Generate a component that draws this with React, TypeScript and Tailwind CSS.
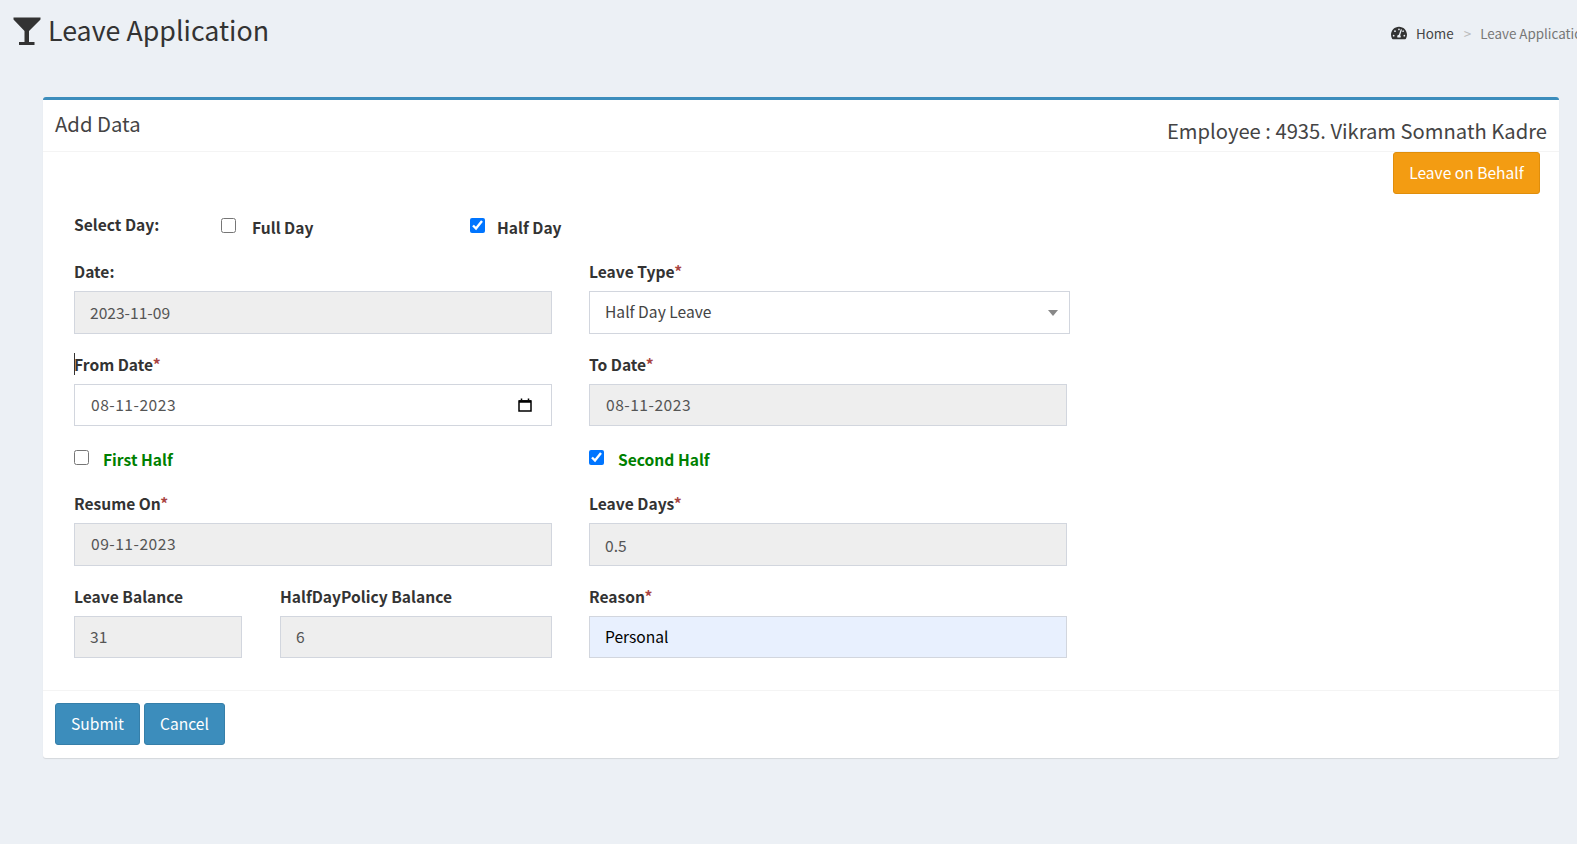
import { FaTachometerAlt } from "react-icons/fa";

const font = "font-['Noto_Sans_CJK_SC','Source_Sans_Pro',sans-serif]";

function Req() {
  return <span className="text-[#a94442]">*</span>;
}

function Label({ text, required }: { text: string; required?: boolean }) {
  return (
    <label className="block h-[24px] leading-[24px] text-[15.6px] font-bold text-[#333]">
      {text}
      {required && <Req />}
    </label>
  );
}

function Field({ value, className }: { value: string; className: string }) {
  return (
    <input
      readOnly
      value={value}
      className={`block border border-[#d2d6de] bg-[#eee] px-[15px] text-[15.6px] text-[#555] outline-none ${className}`}
    />
  );
}

function CheckItem({ label, checked, green, gap }: { label: string; checked?: boolean; green?: boolean; gap: string }) {
  return (
    <div className={`flex items-start ${gap}`}>
      <input type="checkbox" readOnly checked={!!checked} className="mt-0 h-[15px] w-[15px]" />
      <span className={`mt-[-3px] h-[24px] leading-[24px] text-[15.6px] font-bold ${green ? "text-[#008000]" : "text-[#333]"}`}>
        {label}
      </span>
    </div>
  );
}

export default function App() {
  return (
    <div className={`h-[844px] w-[1577px] overflow-hidden bg-[#ecf0f5] ${font}`}>
      <div className="flex h-[97px] items-start justify-between">
        <div className="flex items-start pl-[13px] pt-[12px]">
          <svg width="28" height="31" viewBox="0 0 28 31" className="mt-[1.5px] text-[#333]">
            <path d="M0.5 3.5H27.5V5.5L16 17V28H21.5V31H6V28H11.5V17L0.5 5.5Z" fill="currentColor" />
          </svg>
          <h1 className="ml-[7px] mt-[1px] text-[26.8px] leading-[34px] font-normal text-[#333]">Leave Application</h1>
        </div>
        <div className="flex w-[186px] shrink-0 items-center overflow-hidden whitespace-nowrap pt-[23px] text-[13.4px] leading-[20px]">
          <FaTachometerAlt className="h-[16px] w-[16px] shrink-0 text-[#333]" />
          <span className="ml-[9px] text-[#444]">Home</span>
          <span className="ml-[10px] text-[#bbb]">&gt;</span>
          <span className="ml-[9px] text-[#777]">Leave Application</span>
        </div>
      </div>

      <div className="ml-[43px] mr-[18px] h-[661px] rounded-[3px] border-t-[3px] border-[#3c8dbc] bg-white shadow-[0_1px_1px_rgba(0,0,0,0.1)]">
        <div className="flex h-[52px] items-start justify-between border-b border-[#f4f4f4] pl-[12px] pr-[12px]">
          <h3 className="pt-[9px] text-[20.3px] leading-[28px] font-normal text-[#444]">Add Data</h3>
          <span className="pt-[17px] text-[20.2px] leading-[28px] text-[#444]">Employee : 4935. Vikram Somnath Kadre</span>
        </div>

        <div className="flex h-[539px] flex-col border-b border-[#f4f4f4]">
          <div className="flex justify-end pr-[19px]">
            <button className="h-[42px] w-[147px] rounded-[3px] border border-[#e08e0b] bg-[#f39c12] text-[15.6px] text-white">
              Leave on Behalf
            </button>
          </div>

          <div className="pl-[31px] pt-[21px]">
            <div className="flex h-[44px]">
              <span className="h-[24px] w-[147px] text-[15.6px] leading-[18px] font-bold text-[#333]">Select Day:</span>
              <div className="w-[249px] pt-[3px]">
                <CheckItem label="Full Day" gap="gap-[16px]" />
              </div>
              <div className="pt-[3px]">
                <CheckItem label="Half Day" checked gap="gap-[12px]" />
              </div>
            </div>

            <div className="flex gap-[37px]">
              <div className="w-[478px]">
                <Label text="Date:" />
                <Field value="2023-11-09" className="mt-[8px] h-[43px] w-full pb-[2px]" />
              </div>
              <div className="w-[481px]">
                <Label text="Leave Type" required />
                <div className="mt-[8px] flex h-[43px] items-center justify-between border border-[#d2d6de] bg-white pb-[2px] pl-[15px] pr-[11px] text-[15.6px] text-[#444]">
                  <span>Half Day Leave</span>
                  <span className="mt-[2px] h-0 w-0 border-x-[5px] border-t-[6px] border-x-transparent border-t-[#888]" />
                </div>
              </div>
            </div>

            <div className="mt-[18px] flex gap-[37px]">
              <div className="w-[478px]">
                <div className="relative">
                  <Label text="From Date" required />
                  <span className="absolute left-0 top-[1px] h-[22px] w-px bg-[#333]" />
                </div>
                <div className="mt-[8px] flex h-[42px] items-center justify-between border border-[#d2d6de] bg-white pl-[16px] pr-[19px] text-[15.6px] tracking-[0.5px] text-[#555]">
                  <span>08-11-2023</span>
                  <svg width="14" height="14" viewBox="0 0 14 14" fill="none" stroke="#000">
                    <path d="M1 3H13V13H1Z" strokeWidth="1.5" />
                    <path d="M1 3.5H13" strokeWidth="2.5" />
                    <path d="M3.5 0.5V2M10.5 0.5V2" strokeWidth="1.5" />
                  </svg>
                </div>
              </div>
              <div className="w-[478px]">
                <Label text="To Date" required />
                <div className="mt-[8px] flex h-[42px] items-center border border-[#d2d6de] bg-[#eee] pl-[16px] text-[15.6px] tracking-[0.5px] text-[#555]">
                  08-11-2023
                </div>
              </div>
            </div>

            <div className="mt-[24px] flex h-[41px] gap-[37px]">
              <div className="w-[478px]">
                <CheckItem label="First Half" green gap="gap-[14px]" />
              </div>
              <CheckItem label="Second Half" checked green gap="gap-[14px]" />
            </div>

            <div className="flex gap-[37px]">
              <div className="w-[478px]">
                <Label text="Resume On" required />
                <div className="mt-[8px] flex h-[43px] items-center border border-[#d2d6de] bg-[#eee] pb-[2px] pl-[16px] text-[15.6px] tracking-[0.5px] text-[#555]">
                  09-11-2023
                </div>
              </div>
              <div className="w-[478px]">
                <Label text="Leave Days" required />
                <Field value="0.5" className="mt-[8px] h-[43px] w-full" />
              </div>
            </div>

            <div className="mt-[18px] flex">
              <div className="w-[168px]">
                <Label text="Leave Balance" />
                <Field value="31" className="mt-[8px] h-[42px] w-full pb-[3px]" />
              </div>
              <div className="ml-[38px] w-[272px]">
                <Label text="HalfDayPolicy Balance" />
                <Field value="6" className="mt-[8px] h-[42px] w-full pb-[3px]" />
              </div>
              <div className="ml-[37px] w-[478px]">
                <Label text="Reason" required />
                <input
                  readOnly
                  value="Personal"
                  className="mt-[8px] block h-[42px] w-full border border-[#d2d6de] bg-[#e8f0fe] px-[15px] pb-[3px] text-[15.6px] text-black outline-none"
                />
              </div>
            </div>
          </div>
        </div>

        <div className="flex gap-[4px] pl-[12px] pt-[12px]">
          <button className="h-[42px] w-[85px] rounded-[3px] border border-[#367fa9] bg-[#3c8dbc] text-[15.6px] text-white">Submit</button>
          <button className="h-[42px] w-[81px] rounded-[3px] border border-[#367fa9] bg-[#3c8dbc] text-[15.6px] text-white">Cancel</button>
        </div>
      </div>
    </div>
  );
}
